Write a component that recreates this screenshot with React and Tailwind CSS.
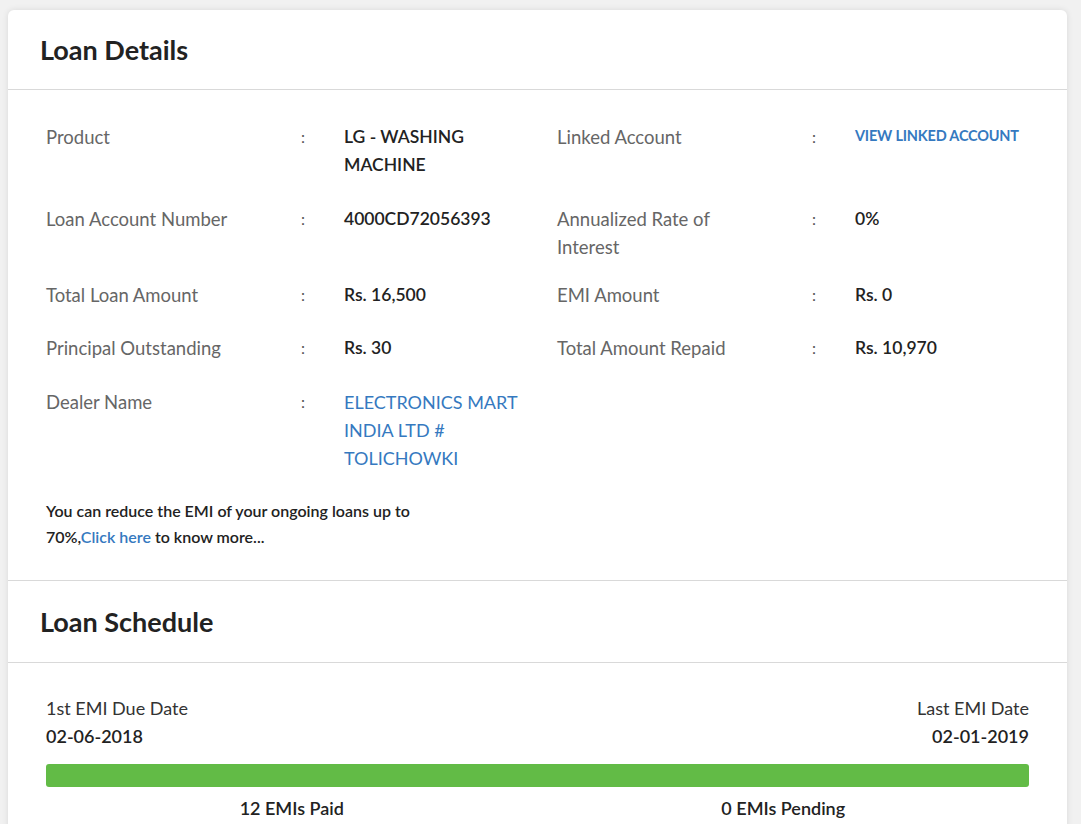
import React from "react";

const FONT = { fontFamily: '"Lato", "Open Sans", sans-serif' };

function Field({ label, children, valueClass = "" }) {
  return (
    <div className="flex items-start">
      <div className="w-[255px] shrink-0 pr-[48px] text-[18.5px] leading-[28px] text-[#666666]">{label}</div>
      <div className="w-[43px] shrink-0 text-[16px] leading-[28px] text-[#555555]">:</div>
      <div className={"max-w-[180px] text-[17.5px] leading-[28px] " + valueClass}>{children}</div>
    </div>
  );
}

export default function App() {
  return (
    <div className="min-h-screen bg-[#f1f1f1] pt-[10px] pl-[8px] pr-[14px] overflow-hidden" style={FONT}>
      <div className="w-[1059px] bg-white rounded-[6px] shadow-[0_0_6px_rgba(0,0,0,0.10)]">
        {/* Loan Details header */}
        <div className="h-[80px] flex items-center pl-[32px] border-b border-[#d9d9d9]">
          <h2 className="text-[27px] font-bold text-[#222222] leading-none">Loan Details</h2>
        </div>

        {/* Details body */}
        <div className="px-[38px] pt-[33px] pb-[30px] border-b border-[#d9d9d9]">
          <div className="grid grid-cols-[511px_1fr] mb-[26px]">
            <Field label="Product" valueClass="font-semibold text-[#222222]">LG - WASHING MACHINE</Field>
            <Field label="Linked Account">
              <a className="block whitespace-nowrap text-[14.5px] font-bold text-[#3579c0] leading-[26px] tracking-[-0.2px]" href="#">VIEW LINKED ACCOUNT</a>
            </Field>
          </div>
          <div className="grid grid-cols-[511px_1fr] mb-[20px]">
            <Field label="Loan Account Number" valueClass="font-semibold text-[#222222]">4000CD72056393</Field>
            <Field label="Annualized Rate of Interest" valueClass="font-semibold text-[#222222]">0%</Field>
          </div>
          <div className="grid grid-cols-[511px_1fr] mb-[25px]">
            <Field label="Total Loan Amount" valueClass="font-semibold text-[#222222]">Rs. 16,500</Field>
            <Field label="EMI Amount" valueClass="font-semibold text-[#222222]">Rs. 0</Field>
          </div>
          <div className="grid grid-cols-[511px_1fr] mb-[26px]">
            <Field label="Principal Outstanding" valueClass="font-semibold text-[#222222]">Rs. 30</Field>
            <Field label="Total Amount Repaid" valueClass="font-semibold text-[#222222]">Rs. 10,970</Field>
          </div>
          <div className="grid grid-cols-[511px_1fr]">
            <Field label="Dealer Name" valueClass="text-[#3579c0] text-[18px]">ELECTRONICS MART INDIA LTD # TOLICHOWKI</Field>
            <div />
          </div>
          <p className="mt-[26px] max-w-[400px] text-[16px] leading-[26px] font-semibold text-[#222222]">
            You can reduce the EMI of your ongoing loans up to 70%,<a href="#" className="text-[#3579c0]">Click here</a> to know more...
          </p>
        </div>

        {/* Loan Schedule header */}
        <div className="h-[82px] flex items-center pl-[32px] border-b border-[#d9d9d9]">
          <h2 className="text-[27px] font-bold text-[#222222] leading-none">Loan Schedule</h2>
        </div>

        {/* Schedule body */}
        <div className="px-[38px] pt-[31px] pb-[40px]">
          <div className="flex justify-between text-[18px] leading-[28px]">
            <div>
              <div className="text-[#333333]">1st EMI Due Date</div>
              <div className="font-semibold text-[#222222]">02-06-2018</div>
            </div>
            <div className="text-right">
              <div className="text-[#333333]">Last EMI Date</div>
              <div className="font-semibold text-[#222222]">02-01-2019</div>
            </div>
          </div>
          <div className="mt-[14px] h-[23px] rounded-[3px] bg-[#62bb46]" />
          <div className="grid grid-cols-2 text-center mt-[7px] text-[18px] leading-[28px] font-semibold text-[#222222]">
            <div>12 EMIs Paid</div>
            <div>0 EMIs Pending</div>
          </div>
        </div>
      </div>
    </div>
  );
}
